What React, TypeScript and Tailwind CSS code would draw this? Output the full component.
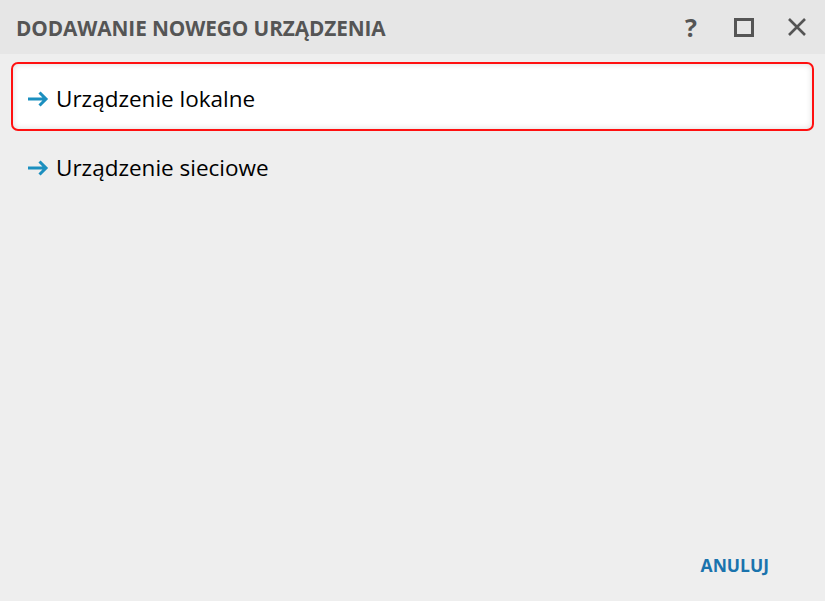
const Arrow = () => (
  <svg width="22" height="16" viewBox="0 0 22 16" fill="none" className="shrink-0">
    <path d="M1 8h18M12.5 1.5L19 8l-6.5 6.5" stroke="#1b8fbf" strokeWidth="3" />
  </svg>
)

const App = () => {
  return (
    <div className="w-[825px] h-[601px] bg-[#eeeeee] flex flex-col font-['Open_Sans',sans-serif]">
      <header className="h-[54px] bg-[#e6e6e6] flex items-center pl-[16px] pr-[17px] shrink-0">
        <h1 className="text-[20.8px] font-bold text-[#555555] tracking-[-0.1px] flex-1 pt-[4px]">DODAWANIE NOWEGO URZĄDZENIA</h1>
        <div className="flex items-center gap-[31px] text-[#555555]">
          <span className="text-[25px] font-bold leading-none w-[22px] text-center">?</span>
          <span className="w-[22px] flex justify-center">
            <span className="w-[20px] h-[19px] border-[3px] border-[#555555] block"></span>
          </span>
          <span className="w-[22px] flex justify-center">
            <svg width="20" height="20" viewBox="0 0 20 20">
              <path d="M2 2l16 16M18 2L2 18" stroke="#555555" strokeWidth="2.6" />
            </svg>
          </span>
        </div>
      </header>
      <main className="flex-1 flex flex-col px-[11px] pt-[8px]">
        <div className="h-[69px] bg-white border-2 border-[#ff1010] rounded-[7px] shadow-[inset_0_0_6px_rgba(0,0,0,0.15)] flex items-center gap-[7px] pl-[14px] pt-[4px]">
          <Arrow />
          <span className="text-[22.5px] text-black">Urządzenie lokalne</span>
        </div>
        <div className="h-[69px] flex items-center gap-[7px] pl-[16px] pt-[4px]">
          <Arrow />
          <span className="text-[22.5px] text-black">Urządzenie sieciowe</span>
        </div>
        <div className="flex-1"></div>
        <div className="flex justify-end pr-[45px] pb-[23px]">
          <button className="text-[17.5px] font-bold text-[#1a73ad]">ANULUJ</button>
        </div>
      </main>
    </div>
  )
}

export default App
